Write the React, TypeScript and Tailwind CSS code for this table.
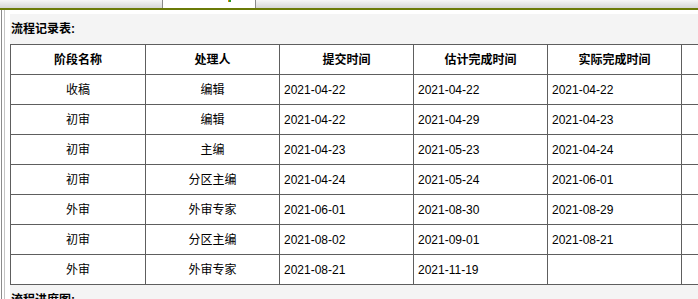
const rows = [
  ["收稿", "编辑", "2021-04-22", "2021-04-22", "2021-04-22"],
  ["初审", "编辑", "2021-04-22", "2021-04-29", "2021-04-23"],
  ["初审", "主编", "2021-04-23", "2021-05-23", "2021-04-24"],
  ["初审", "分区主编", "2021-04-24", "2021-05-24", "2021-06-01"],
  ["外审", "外审专家", "2021-06-01", "2021-08-30", "2021-08-29"],
  ["初审", "分区主编", "2021-08-02", "2021-09-01", "2021-08-21"],
  ["外审", "外审专家", "2021-08-21", "2021-11-19", ""],
]

const headers = ["阶段名称", "处理人", "提交时间", "估计完成时间", "实际完成时间", ""]

export default function App() {
  return (
    <div
      className="w-[698px] h-[299px] overflow-hidden bg-white text-black"
      style={{ fontFamily: '"Liberation Sans", "Noto Sans CJK SC", sans-serif' }}
    >
      {/* tab strip */}
      <div className="flex h-[8px] border-b-2 border-[#6b7b08] box-content">
        <div className="w-[163px] bg-gradient-to-b from-[#f6f6f6] to-[#d6d6d6] border-r border-[#8a8a8a]" />
        <div className="relative w-[92px] bg-white">
          <span className="absolute left-[65px] top-0 w-px h-[2px] bg-[#e08a00]" />
          <span className="absolute left-[66px] top-0 w-[2px] h-[2px] bg-[#2a9a2a]" />
        </div>
        <div className="flex-1 bg-gradient-to-b from-[#f6f6f6] to-[#d6d6d6] border-l border-[#8a8a8a]" />
      </div>

      <div className="flex h-full">
        {/* left frame lines */}
        <div className="w-[10px] shrink-0 flex">
          <div className="w-px ml-px bg-[#8c8c8c]" />
          <div className="w-px ml-[2px] bg-[#c4c4c4]" />
        </div>

        <div className="flex-1 pt-[4px]">
          <div className="bg-[#f4f4f4] h-full">
            <div className="h-[30px] flex items-center pl-px text-[12px] font-bold">流程记录表:</div>
            <table className="table-fixed border-collapse bg-white text-[12px] w-[805px]">
              <colgroup>
                <col className="w-[135px]" />
                <col className="w-[134px]" />
                <col className="w-[134px]" />
                <col className="w-[134px]" />
                <col className="w-[134px]" />
                <col className="w-[134px]" />
              </colgroup>
              <thead>
                <tr className="h-[30px]">
                  {headers.map((h, i) => (
                    <th key={i} className="border border-[#5e5e5e] font-bold text-center p-0">
                      {h}
                    </th>
                  ))}
                </tr>
              </thead>
              <tbody>
                {rows.map((r, i) => (
                  <tr key={i} className="h-[30px]">
                    <td className="border border-[#5e5e5e] text-center p-0">{r[0]}</td>
                    <td className="border border-[#5e5e5e] text-center p-0">{r[1]}</td>
                    <td className="border border-[#5e5e5e] pl-[4px]">{r[2]}</td>
                    <td className="border border-[#5e5e5e] pl-[4px]">{r[3]}</td>
                    <td className="border border-[#5e5e5e] pl-[4px]">{r[4]}</td>
                    <td className="border border-[#5e5e5e]"></td>
                  </tr>
                ))}
              </tbody>
            </table>
            <div className="h-[30px] flex items-center pl-px text-[12px] font-bold">流程进度图:</div>
          </div>
        </div>
      </div>
    </div>
  )
}
